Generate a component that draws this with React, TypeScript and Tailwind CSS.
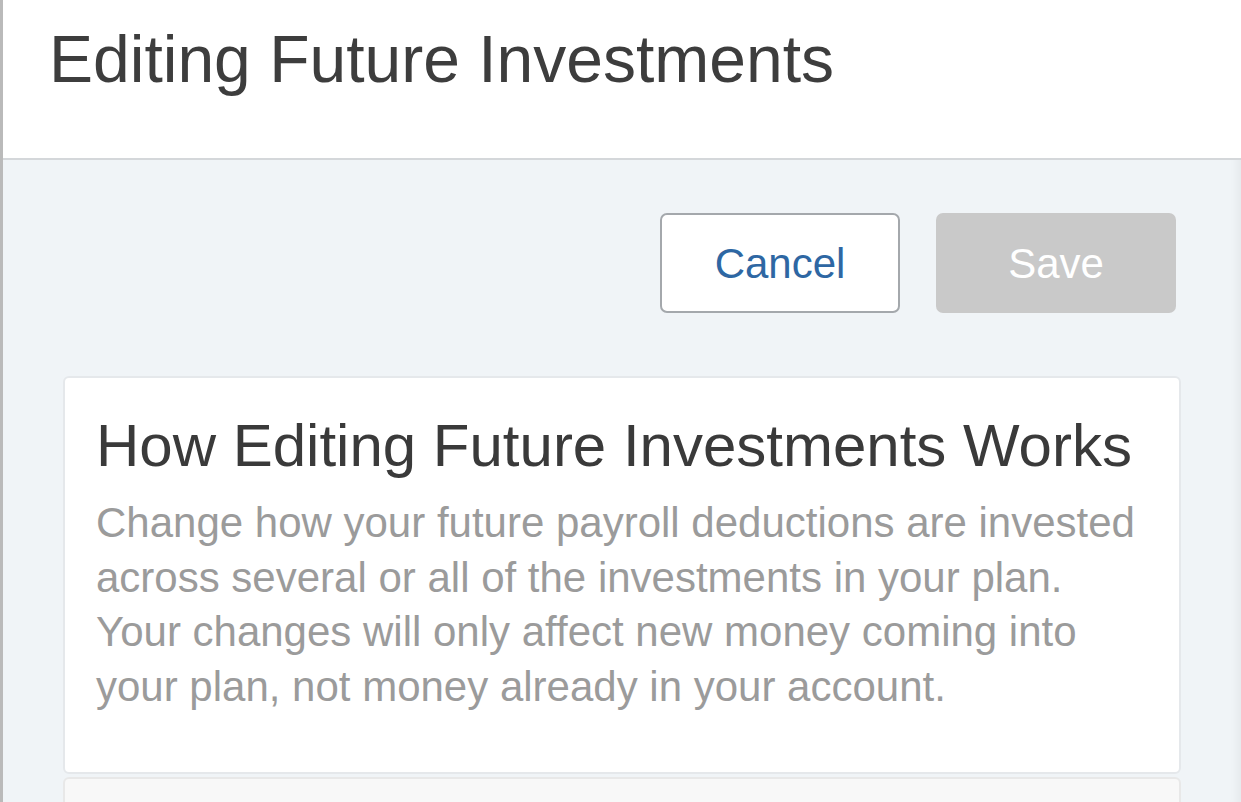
export default function App() {
  return (
    <div
      className="w-full h-[802px] overflow-hidden border-l-[3px] border-[#bababa] bg-[#f0f4f7] shadow-[inset_-14px_0_12px_-12px_rgba(0,0,0,0.06)]"
      style={{ fontFamily: '"Liberation Sans", Arial, sans-serif' }}
    >
      {/* Header */}
      <div className="h-[160px] bg-white border-b-2 border-[#d4d7da] pl-[46px] pt-[26px]">
        <h1 className="text-[66px] leading-[66px] text-[#3d3d3d]">
          Editing Future Investments
        </h1>
      </div>

      {/* Actions */}
      <div className="flex justify-end gap-[36px] pt-[53px] pr-[65px]">
        <button className="w-[240px] h-[100px] rounded-[7px] border-2 border-[#a4a8ac] bg-white text-[42px] text-[#2e67a3]">
          Cancel
        </button>
        <button className="w-[240px] h-[100px] rounded-[7px] bg-[#c9c9c9] text-[42px] text-white">
          Save
        </button>
      </div>

      {/* Info card */}
      <div className="mx-[60px] mt-[63px] flex flex-col gap-[3px]">
        <div className="rounded-md border-2 border-[#e5e8eb] bg-white pl-[31px] pr-[38px] pt-[38px] pb-[58px]">
          <h2 className="text-[60px] leading-[60px] text-[#3a3a3a]">
            How Editing Future Investments Works
          </h2>
          <p className="mt-[20px] text-[42px] leading-[54.5px] text-[#9b9b9b]">
            Change how your future payroll deductions are invested across
            several or all of the investments in your plan. Your changes will
            only affect new money coming into your plan, not money already in
            your account.
          </p>
        </div>
        <div className="h-[60px] rounded-md border-2 border-[#e8e8e8] bg-[#f8f8f8]" />
      </div>
    </div>
  );
}
